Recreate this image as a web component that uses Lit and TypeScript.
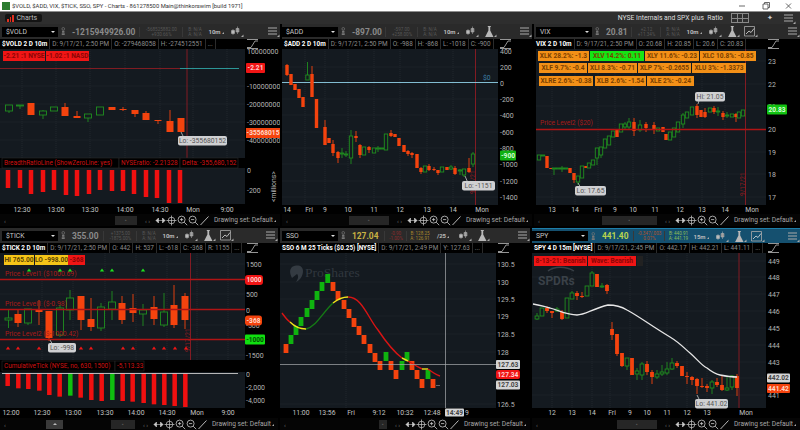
import { LitElement, html, css, svg } from 'lit'
import { customElement } from 'lit/decorators.js'

// [x, top, bottom, up, wickTop, wickBottom]
type Candle = [number, number, number, number?, number?, number?]

const UP = '#1f8f1f'
const DOWN = '#f4430e'
const LINE_RED = '#b01414'

const candles = (list: Candle[], w: number) => list.map(([x, t, b, up, wt, wb]) => {
  const color = up ? UP : DOWN
  return svg`
    <line x1=${x} x2=${x} y1=${wt ?? t} y2=${wb ?? b} stroke=${color} stroke-width="0.9"></line>
    <rect x=${x - w / 2} y=${t} width=${w} height=${Math.max(b - t, 1)}
      fill=${up ? '#141a20' : color} stroke=${up ? color : 'none'} stroke-width="0.9"></rect>`
})

const grid = (xs: number[], ys: number[], x0: number, x1: number, y0: number, y1: number) => svg`
  ${xs.map(x => svg`<line x1=${x} x2=${x} y1=${y0} y2=${y1} stroke="#2a3138" stroke-width="0.6" stroke-dasharray="1 1"></line>`)}
  ${ys.map(y => svg`<line x1=${x0} x2=${x1} y1=${y} y2=${y} stroke="#1f252c" stroke-width="0.6"></line>`)}`

const pill = (x: number, y: number, w: number, text: string, fill: string, color: string, r = 0, h = 10) => svg`
  <rect x=${x} y=${y} width=${w} height=${h} rx=${r} fill=${fill}></rect>
  <text x=${x + w / 2} y=${y + h / 2 + 2.4} text-anchor="middle" font-size="6.6" font-weight="700" fill=${color}>${text}</text>`

const axis = (x: number, items: [string, number][]) => items.map(([t, y]) =>
  svg`<text x=${x} y=${y + 2.5} font-size="7" fill="#b4b4b4">${t}</text>`)

const times = (y: number, items: [string, number][]) => items.map(([t, x]) =>
  svg`<text x=${x} y=${y} text-anchor="middle" font-size="6.8" fill="#c4c4c4">${t}</text>`)

const bubble = (x: number, y: number, w: number, text: string, tipX: number, tipY: number) => svg`
  <line x1=${tipX} y1=${tipY} x2=${tipX + 3} y2=${y + 2} stroke="#c8c8c8" stroke-width="0.8"></line>
  <rect x=${x} y=${y} width=${w} height="9.5" rx="2" fill="#cfd0d2"></rect>
  <text x=${x + w / 2} y=${y + 7} text-anchor="middle" font-size="6.8" fill="#555">${text}</text>`

const vline = (x: number, y0: number, y1: number) =>
  svg`<line x1=${x} x2=${x} y1=${y0} y2=${y1} stroke="#8f1c24" stroke-width="0.9"></line>`

const dateText = (x: number, y: number) =>
  svg`<text transform="translate(${x} ${y}) rotate(-90)" font-size="6.5" fill="#8c1c20">9/17/21</text>`

const bars = (xs: number[], top: number, bottoms: number[], w: number, green: number[] = []) =>
  xs.map((x, i) => svg`<rect x=${x - w / 2} y=${top} width=${w} height=${bottoms[i] - top}
    fill=${green.includes(i) ? '#0fc00f' : '#f01010'}></rect>`)

const studyHead = (y: number, cells: [string, number, number][], color: string) => cells.map(([t, x, w]) => svg`
  <rect x=${x} y=${y} width=${w} height="10" fill="#000" stroke="#2a2a2a" stroke-width="0.6"></rect>
  <text x=${x + 2} y=${y + 7} font-size="6.4" fill=${color}>${t}</text>`)

function chart1 () {
  const c: Candle[] = [
    [9, 105, 111, 1, 105, 113], [20, 105, 105.5, 1, 105, 109], [31, 103, 115], [43, 111, 115, 1, 110, 119],
    [54, 107, 111, 1], [65, 107, 116, 0, 103, 116], [77, 116, 118, 0, 111, 118], [88, 114, 118, 1, 114, 122],
    [100, 107, 115, 1], [112, 107, 110], [123, 109, 110, 0, 107, 111], [135, 110, 114, 0, 110, 117],
    [146, 113, 120, 0, 111, 120], [158, 120, 121, 0, 120, 124], [170, 121, 132, 0, 110, 132], [181, 118, 132]
  ]
  return svg`
    <rect x="0" y="49" width="245" height="109" fill="#141a20"></rect>
    <rect x="0" y="168" width="245" height="36" fill="#141a20"></rect>
    ${grid([22, 56, 90, 125, 160, 193, 227], [86, 104, 122, 140], 0, 245, 49, 158)}
    ${vline(187, 49, 158)}
    <line x1="0" x2="180" y1="68.5" y2="68.5" stroke="#8c1d22" stroke-width="0.9"></line>
    <line x1="180" x2="239" y1="68.5" y2="68.5" stroke="#2fa5a5" stroke-width="0.9"></line>
    ${pill(3, 51, 42, '-2.21 :1 NYSE', '#f01515', '#8a0505')}
    ${pill(46, 51, 43, '-1.02 :1 NASD', '#f01515', '#8a0505')}
    ${candles(c, 7)}
    ${bubble(178, 136, 49, 'Lo: -355680152', 181, 132)}
    ${studyHead(158, [['BreadthRatioLine (ShowZeroLine: yes)', 2, 117], ['NYSEratio: -2.21328', 119, 61], ['Delta: -355,680,152', 180, 58]], '#d01010')}
    ${bars([8, 20, 31, 43, 54, 66, 77, 89, 100, 112, 123, 134, 146, 157, 169, 180], 170,
      [188, 188, 194, 192, 190, 195, 196, 194, 190, 191, 191, 194, 197, 198, 203, 203], 4.5)}
    <rect x="245" y="49" width="35" height="156" fill="#000"></rect>
    ${axis(247, [['10000000', 51], ['-10000000', 86], ['-20000000', 104], ['-30000000', 122], ['-40000000', 140], ['0', 170], ['-200', 190]])}
    ${pill(246, 63, 19, '-2.21', '#f01515', '#ffd0d0', 1)}
    ${pill(246, 128, 34, '-35568015', '#f4430e', '#ffd8c8', 0)}
    <text transform="translate(276 202) rotate(-90)" font-size="6.8" fill="#b4b4b4">&lt;millions&gt;</text>
    ${times(212, [['12:30', 22], ['13:00', 56], ['13:30', 90], ['14:00', 125], ['14:30', 160], ['Mon', 193], ['9:00', 227]])}`
}

function chart2 () {
  const c: Candle[] = [
    [287, 65, 75, 0, 64, 76], [291, 74, 85], [295, 84, 90], [299, 89, 98], [303, 97, 107],
    [307.5, 75, 80, 1, 62, 80], [312, 74, 97, 0, 66, 97], [316.5, 99, 128], [325, 127, 145, 0, 120, 145], [329, 138, 143],
    [333, 144, 153, 0, 140, 156], [338, 152, 158, 0, 151, 163], [342, 153, 154, 1, 148, 158], [346, 154, 155, 1, 151, 157],
    [351, 136, 158, 1, 130, 164], [356, 136, 138, 0, 131, 142], [360, 145, 155, 0, 144, 158], [364, 147, 155, 1],
    [369, 147, 150, 0, 146, 153], [374, 148, 153, 1], [378, 148, 149, 1, 146, 152], [382, 148, 149, 1],
    [386, 134, 150, 1], [391, 133, 136, 0, 130, 137], [395, 134, 137], [399, 138, 146], [404, 145, 152],
    [408, 151, 154, 0, 150, 156], [412, 153, 155, 0, 152, 158], [417, 154, 168], [421, 168, 172, 0, 167, 174],
    [425, 166, 172, 1], [429, 166, 170, 0, 164, 171], [434, 169, 170, 0, 167, 171], [438, 170, 173, 0, 170, 175],
    [442, 167, 172, 1], [447, 167, 170], [451, 167, 169, 1, 165, 170], [455, 168, 174, 0, 166, 175],
    [460, 170, 171, 1, 169, 175], [464, 169, 175, 1, 169, 177], [469, 168, 172, 0, 158, 173], [473, 154, 164, 1, 152, 167]
  ]
  return svg`
    <rect x="282" y="49" width="216" height="156" fill="#141a20"></rect>
    ${grid([305, 325, 348, 374, 400, 427, 453], [67, 99, 115, 132, 148, 164, 181, 197], 282, 498, 49, 205)}
    ${vline(475.5, 49, 205)}
    ${dateText(475, 194)}
    <line x1="282" x2="498" y1="82.5" y2="82.5" stroke="#8fd0e6" stroke-width="0.9"></line>
    <text x="483" y="80" font-size="6.8" fill="#3d7fa6">$0</text>
    ${candles(c, 3.4)}
    ${bubble(462, 181, 33, 'Lo: -1151', 465, 176)}
    ${axis(500, [['400', 51], ['200', 67], ['0', 83], ['-200', 99], ['-400', 115], ['-600', 132], ['-800', 148], ['-1000', 164], ['-1200', 181], ['-1400', 197]])}
    ${pill(500, 150.5, 16, '-900', '#11b011', '#d8ffd8', 1)}
    ${times(212, [['14', 287], ['Fri', 309], ['9', 325], ['10', 348], ['11', 374], ['12', 400], ['13', 427], ['14', 453], ['Mon', 482]])}`
}

function chart3 () {
  const c: Candle[] = [
    [539, 155, 160, 1], [543, 155, 156, 1], [547, 156, 168], [551, 168, 169], [554, 168, 169, 1, 168, 175],
    [558, 168, 169, 1], [562, 168, 169, 1, 166, 172], [566, 168, 169, 1], [570, 168, 173], [574, 173, 180, 0, 173, 183],
    [578, 176, 182, 1, 176, 185], [582, 166, 178, 1], [586, 166, 168], [589, 163, 168, 1], [593, 160, 165, 1],
    [597, 148, 158, 1, 148, 165], [601, 147, 155, 1, 147, 158], [605, 139, 148, 1], [609, 136, 145, 1], [613, 131, 137, 1],
    [617, 130, 137], [621, 124, 132, 1], [625, 124, 127, 1, 122, 130], [629, 122, 127, 1, 118, 130], [634, 122, 131, 0, 118, 136],
    [640, 125, 130, 1, 120, 132], [646, 124, 128, 0, 122, 132], [654, 125, 130, 0, 122, 134], [658, 128, 131, 1], [663, 127, 132],
    [666, 134, 140], [670, 132, 140, 1], [674, 128, 137, 1], [678, 122, 132, 1], [683, 115, 124, 1, 113, 128],
    [687, 112, 118, 1], [692, 107, 115, 1], [697, 106, 115, 0, 104, 118], [701, 110, 117], [705, 112, 117, 0, 108, 118],
    [710, 108, 112, 1], [714, 108, 112, 0, 106, 114], [718, 111, 112, 1, 107, 116], [723, 113, 117, 0, 111, 120],
    [727, 115, 116, 1, 112, 118], [732, 114, 117, 1], [736, 114, 117, 0, 113, 122], [739, 112, 118, 1], [743, 110, 116, 1]
  ]
  const tag = (x: number, y: number, w: number, t: string, fill = '#f39017') => pill(x, y, w, t, fill, '#7a3f00', 0, 10)
  return svg`
    <rect x="536" y="49" width="230" height="156" fill="#141a20"></rect>
    ${grid([552, 575, 598, 615, 633, 655, 680, 702, 725], [61, 84, 106, 152, 174, 197], 536, 766, 49, 205)}
    ${vline(745.5, 49, 205)}
    ${dateText(745, 196)}
    ${candles(c, 3.4)}
    <line x1="536" x2="766" y1="129.5" y2="129.5" stroke=${LINE_RED} stroke-width="1.4"></line>
    <text x="540" y="125" font-size="6.6" fill="#a81a1a">Price Level2 ($20)</text>
    ${tag(538, 51, 51, 'XLK 28.2%: -1.3')}${tag(590, 51, 54, 'XLV 14.2%: 0.11', '#14e614')}
    ${tag(645, 51, 54, 'XLY 11.6%: -0.23')}${tag(700, 51, 56, 'XLC 10.8%: -0.85')}
    ${tag(539, 63, 48, 'XLF 9.7%: -0.4')}${tag(588, 63, 49, 'XLI 8.3%: -0.71')}
    ${tag(638, 63, 53, 'XLP 7%: -0.2655')}${tag(692, 63, 54, 'XLU 3%: -1.3373')}
    ${tag(539, 76, 54, 'XLRE 2.6%: -0.38')}${tag(595, 76, 51, 'XLB 2.6%: -1.54')}${tag(647, 76, 47, 'XLE 2%: -0.24')}
    ${bubble(695, 92, 30, 'Hi: 21.05', 698, 104)}
    ${bubble(575, 186, 31, 'Lo: 17.65', 578, 183)}
    ${axis(768, [['23', 61], ['22', 84], ['21', 106], ['20', 129], ['19', 152], ['18', 174], ['17', 197]])}
    ${pill(767, 104.5, 20, '20.83', '#12c212', '#d8ffd8', 1)}
    ${times(212, [['13', 552], ['14', 575], ['Fri', 598], ['9', 615], ['10', 633], ['11', 655], ['12', 680], ['13', 702], ['14', 725], ['Mon', 752]])}`
}

function chart4 () {
  const c: Candle[] = [
    [8.5, 318, 320, 1, 310, 328], [18, 314, 323, 0, 310, 327], [28, 309, 323, 1, 309, 325], [39, 309, 312, 0, 300, 325],
    [49, 311, 338, 0, 311, 341], [60, 308, 335, 1, 305, 337], [70, 298, 310, 1, 290, 320], [81, 296, 320, 0, 296, 330],
    [91, 319, 327, 0, 298, 331], [101, 307, 328, 1, 303, 331], [112, 302, 309, 1, 291, 320], [122, 303, 320, 0, 296, 324],
    [133, 308, 313, 0, 294, 322], [143, 310, 314, 1, 304, 326], [154, 307, 319, 0, 296, 325], [164, 312, 325, 1, 293, 327],
    [174, 305, 325, 0, 285, 328], [185, 296, 320, 0, 293, 329]
  ]
  const tri = (x: number, y: number, fill: string) =>
    svg`<polygon points="${x - 2.2},${y + 3} ${x + 2.2},${y + 3} ${x},${y}" fill=${fill}></polygon>`
  const xs = [23, 55, 85, 118, 148, 179, 211, 242, 274, 305, 337, 368, 398, 431, 462, 493, 524, 556].map(v => v / 3)
  const ends = [183, 190, 192, 197, 210, 215, 212, 218, 225, 228, 225, 228, 230, 234, 238, 240, 243, 246].map(v => 325 + v / 3)
  return svg`
    <rect x="0" y="253" width="245" height="107" fill="#141a20"></rect>
    <rect x="0" y="372" width="245" height="36" fill="#141a20"></rect>
    ${grid([42, 73, 105, 136, 167, 197, 228], [264, 294, 325, 355], 0, 245, 253, 360)}
    ${vline(190.5, 253, 360)}
    ${candles(c, 7)}
    ${dateText(190, 352)}
    ${[279.5, 309.5, 339.5].map(y => svg`<line x1="0" x2="245" y1=${y} y2=${y} stroke=${LINE_RED} stroke-width="1.5"></line>`)}
    <text x="5" y="276" font-size="6.8" fill="#a81a1a">Price Level1 ($1000.69)</text>
    <text x="5" y="306" font-size="6.8" fill="#a81a1a">Price Level1 ($-0.98)</text>
    <text x="5" y="336" font-size="6.8" fill="#a81a1a">Price Level2 ($-1000.42)</text>
    ${pill(4, 255, 30, 'HI 765.00', '#f5c518', '#5a4300')}
    ${pill(35, 255, 33, 'LO -998.00', '#f5c518', '#5a4300')}
    ${pill(68, 255, 17, '-368', '#f01515', '#8a0505')}
    ${[29, 60, 70, 102, 112, 143].map(x => tri(x, 268.5, '#1fe01f'))}
    ${[8, 18, 39, 81, 91, 123, 133, 154, 164, 175, 186].map(x => tri(x, 346.5, '#f01515'))}
    ${bubble(48, 343, 28, 'Lo: -998', 50, 340)}
    ${studyHead(361, [['CumulativeTick (NYSE, no, 630, 1500)', 2, 113], ['-5,113.33', 115, 29]], '#d01010')}
    ${bars(xs, 373, ends, 4.5, [6, 10])}
    <line x1="2" x2="238" y1="373.5" y2="373.5" stroke="#c8c8c8" stroke-width="0.9"></line>
    <rect x="245" y="253" width="33" height="155" fill="#000"></rect>
    ${axis(246, [['1500', 264], ['500', 294], ['0', 310], ['-500', 325], ['-1500', 355], ['0', 374], ['-2,000', 387], ['-4,000', 400]])}
    ${pill(245, 275, 18, '1000', '#f01515', '#ffd0d0', 3)}
    ${pill(245, 315.5, 17, '-368', '#f4430e', '#ffd8c8', 3)}
    ${pill(245, 334.5, 20, '-1000', '#10e010', '#064d06', 1)}
    ${times(415, [['12:00', 11], ['12:30', 42], ['13:00', 73], ['13:30', 105], ['14:00', 136], ['14:30', 167], ['Mon', 197], ['9:00', 228]])}`
}

function chart5 () {
  const bricks: [number, number, number][] = [
    [327.7, 274, 1], [322, 282, 1], [317, 291, 1], [312, 300, 1], [307, 308, 1], [301, 317, 1], [296, 326, 1], [291, 335, 1], [286, 344, 0],
    [333, 282, 0], [338, 291, 0], [344, 300, 0], [349, 309, 0], [354, 318, 0], [359, 326, 0], [364, 335, 0], [370, 344, 0], [375, 353, 0],
    [380, 361, 0], [386, 352, 1], [391, 361, 0], [396, 370, 0], [402, 361, 1], [407, 352, 1], [412, 361, 0], [417, 370, 0], [422, 379, 0],
    [428, 370, 1], [433, 379, 0]
  ]
  return svg`
    <rect x="280" y="253" width="216" height="155" fill="#141a20"></rect>
    ${grid([346], [264, 282, 299, 316, 334, 352, 404], 280, 496, 253, 408)}
    <path d="M292 267c6-3 11-1 11 4s-3 9-7 11c2-3 3-6 1-8l-5 4c-2-4-3-8 0-11z" fill="#343b42"></path>
    <text x="305" y="277" font-family="'Liberation Serif', serif" font-size="13.5" fill="#30373e">ProShares</text>
    ${bricks.map(([x, y, up]) => svg`<rect x=${x - 2.4} y=${y} width="4.8" height="9" fill=${up ? '#0fb30f' : '#f4430e'}></rect>`)}
    <path d="M282 313C285 317 287 320 290 322" fill="none" stroke="#d81414" stroke-width="1.4"></path>
    <path d="M290 322C294 326 300 329 306 329" fill="none" stroke="#f2e21a" stroke-width="1.4"></path>
    <path d="M306 329C316 327 323 312 333 303" fill="none" stroke="#157a15" stroke-width="1.4"></path>
    <path d="M333 303C338 299 343 297 348 297" fill="none" stroke="#f2e21a" stroke-width="1.4"></path>
    <path d="M348 297C362 297 368 318 378 330C386 342 394 352 402 358" fill="none" stroke="#d81414" stroke-width="1.4"></path>
    <path d="M402 358L408 361" fill="none" stroke="#f2e21a" stroke-width="1.4"></path>
    <path d="M408 361C416 366 420 368 422 369" fill="none" stroke="#d81414" stroke-width="1.4"></path>
    <path d="M422 369L428 369" fill="none" stroke="#f2e21a" stroke-width="1.4"></path>
    <path d="M428 369C432 372 436 375 440 376" fill="none" stroke="#d81414" stroke-width="1.4"></path>
    <line x1="436" x2="440" y1="385.5" y2="385.5" stroke="#888" stroke-width="0.7"></line>
    <line x1="280" x2="496" y1="364.5" y2="364.5" stroke="#a9adb0" stroke-width="0.7"></line>
    <line x1="445.5" x2="445.5" y1="253" y2="408" stroke="#a9adb0" stroke-width="0.7"></line>
    ${axis(497, [['130.5', 264], ['130', 282], ['129.5', 299], ['129', 316], ['128.5', 334], ['128', 352], ['126.5', 404]])}
    ${pill(496, 360, 24, '127.63', '#d4d5d6', '#444', 1, 9)}
    ${pill(496, 370, 24, '127.34', '#f01515', '#ffd0d0', 2, 9)}
    ${pill(496, 380.5, 24, '127.03', '#d4d5d6', '#444', 1, 9)}
    ${times(415, [['11:00', 301], ['13:56', 327], ['Fri', 351], ['9:12', 379], ['10:32', 405], ['12:48', 432], ['9', 467]])}
    ${pill(445, 408.5, 19, '14:49', '#d4d5d6', '#444', 1, 8)}`
}

function chart6 () {
  const c: Candle[] = [
    [537, 316, 319, 1, 313, 320], [542, 308, 316, 1], [547, 308, 311, 0, 306, 313], [552, 311, 313, 0, 311, 318], [557, 309, 311, 1, 307, 312],
    [562, 312, 319, 0, 310, 320], [567, 298, 318, 1], [572, 293, 299, 1, 291, 299], [577, 293, 296, 0, 291, 300], [582, 296, 297, 0, 292, 298],
    [587, 286, 296, 1], [592, 273, 286, 1, 271, 286], [597, 274, 287], [602, 286, 287, 1, 283, 288], [607, 285, 291, 0, 284, 294],
    [612, 329, 335, 0, 322, 340], [617, 334, 354, 0, 334, 356], [622, 353, 366, 0, 353, 367], [627, 358, 366, 1, 358, 370], [632, 358, 375],
    [637, 371, 374, 1, 368, 380], [642, 364, 375, 1, 362, 380], [647, 364, 372, 0, 361, 375], [652, 372, 377, 0, 370, 384], [657, 374, 377, 1, 370, 379],
    [662, 372, 374, 1, 365, 376], [667, 369, 373, 1, 362, 375], [672, 363, 369, 1, 358, 370], [677, 363, 366, 0, 361, 368], [682, 366, 376],
    [687, 376, 377, 0, 372, 384], [692, 377, 380, 0, 376, 385], [697, 379, 386, 0, 378, 394], [702, 386, 387, 0, 378, 388], [707, 386, 388, 0, 384, 392],
    [712, 382, 388, 1, 380, 394], [717, 382, 385, 0, 378, 387], [722, 385, 390, 0, 376, 391], [727, 388, 390, 1, 376, 391], [732, 376, 387, 1, 375, 390],
    [737, 376, 388, 0, 374, 396]
  ]
  return svg`
    <rect x="532" y="253" width="234" height="155" fill="#141a20"></rect>
    ${grid([552, 572, 592, 610, 630, 647, 667, 687, 707], [261, 277, 294, 311, 328, 345, 362, 378, 395], 532, 766, 253, 408)}
    ${vline(739, 253, 408)}
    <path d="M548 271C554 266 566 266 574 271" fill="none" stroke="#3a4148" stroke-width="1.4"></path>
    <text x="538" y="285" font-size="12" font-weight="700" fill="#3a4148">SPDRs</text>
    ${candles(c, 3.8)}
    <path d="M533 304C540 305 545 307 550 308C560 311 568 315 577 315C585 315 592 309 608 305C615 305 622 307 627 310C640 317 650 325 670 337C680 343 685 349 690 353C697 359 702 366 707 368C712 372 715 374 720 375C725 376 730 377 737 377" fill="none" stroke="#e6e6e6" stroke-width="1.3"></path>
    ${pill(534, 256, 53, '8-13-21: Bearish', '#f01515', '#8a0505')}
    ${pill(588, 256, 48, 'Wave: Bearish', '#f01515', '#8a0505')}
    <rect x="637" y="256" width="6" height="10" fill="#222"></rect>
    ${bubble(695, 399, 33, 'Lo: 441.02', 697, 395)}
    ${axis(768, [['449', 261], ['448', 277], ['447', 294], ['446', 311], ['445', 328], ['444', 345], ['443', 362], ['441', 395]])}
    ${pill(767, 373.5, 23, '442.02', '#d4d5d6', '#444', 1, 9)}
    ${pill(767, 384, 23, '441.42', '#f4430e', '#ffd8c8', 1, 9)}
    ${times(415, [['12', 552], ['13', 572], ['14', 592], ['Fri', 612], ['9', 630], ['10', 647], ['11', 667], ['12', 687], ['13', 707], ['Mon', 746]])}`
}

interface Panel {
  x0: number; w: number; y0: number; plotEnd: number; pad: number; active?: boolean
  sym: string; price: string; priceColor: string; pw: number
  change: string[]; changeColor: string; cw: number
  ba: string[]; baColor: string; bw: number
  period: string; tw: number; icons: string[]
  info: string[]; chart: () => unknown
  track: number; extra?: boolean
}

const panels: Panel[] = [
  { x0: 0, w: 280, y0: 49, plotEnd: 245, pad: 2, sym: '$VOLD', price: '-1215949926.00', priceColor: '#8a8a8a', pw: 69,
    change: ['-568525882.00', '+930.66%'], changeColor: '#565656', cw: 43, ba: ['B: N/A', 'A: N/A'], baColor: '#565656', bw: 24, period: '10m', tw: 20, icons: ['candle'],
    info: ['$VOLD 2 D 10m', 'D: 9/17/21, 2:50 PM', 'O: -279468058', 'H: -274512551', '...'], chart: chart1, track: 22 },
  { x0: 282, w: 250, y0: 49, plotEnd: 498, pad: 0, sym: '$ADD', price: '-897.00', priceColor: '#8a8a8a', pw: 35,
    change: ['-597.00', '+258.00%'], changeColor: '#565656', cw: 32, ba: ['B: N/A', 'A: N/A'], baColor: '#565656', bw: 24, period: '10m', tw: 20, icons: ['candle', 'flask'],
    info: ['$ADD 2 D 10m', 'D: 9/17/21, 2:50 PM', 'O: -988', 'H: -868', 'L: -1018', 'C: -900'], chart: chart2, track: 40 },
  { x0: 534, w: 266, y0: 49, plotEnd: 766, pad: 2, sym: 'VIX', price: '20.81', priceColor: '#8a8a8a', pw: 27,
    change: ['+2.12', '+11.34%'], changeColor: '#565656', cw: 29, ba: ['B: N/A', 'A: N/A'], baColor: '#565656', bw: 24, period: '10m', tw: 20, icons: ['candle', 'flask', 'draw'],
    info: ['VIX 2 D 10m', 'D: 9/17/21, 2:50 PM', 'O: 20.68', 'H: 20.85', 'L: 20.6', 'C: 20.83'], chart: chart3, track: 55 },
  { x0: 0, w: 278, y0: 253, plotEnd: 245, pad: 2, sym: '$TICK', price: '355.00', priceColor: '#8a8a8a', pw: 33,
    change: ['+1375.00', '-1875.00%'], changeColor: '#565656', cw: 33, ba: ['B: N/A', 'A: N/A'], baColor: '#565656', bw: 24, period: '10m', tw: 20, icons: ['candle', 'flask', 'draw'],
    info: ['$TICK 2 D 10m', 'D: 9/17/21, 2:50 PM', 'O: 442', 'H: 537', 'L: -618', 'C: -368', 'R: 1155', '...'], chart: chart4, track: 24, extra: true },
  { x0: 280, w: 250, y0: 253, plotEnd: 496, pad: 2, sym: 'SSO', price: '127.04', priceColor: '#c9b243', pw: 34,
    change: ['-0.90', '-1.00%'], changeColor: '#8c2a2a', cw: 22, ba: ['B: 128.25', 'A: 126.91'], baColor: '#a8872a', bw: 26, period: '/25', tw: 22, icons: ['candle', 'flask'],
    info: ['SSO 6 M 25 Ticks ($0.25) [NYSE]', 'D: 9/17/21, 2:49 PM', 'Y: 127.63', '...'], chart: chart5, track: 8 },
  { x0: 532, w: 268, y0: 253, plotEnd: 766, pad: 0, active: true, sym: 'SPY', price: '441.40', priceColor: '#b9d44e', pw: 33,
    change: ['-0.347/.003', '0.07%'], changeColor: '#b0502a', cw: 31, ba: ['B: 440.91', 'A: 441.19'], baColor: '#8fbf5a', bw: 27, period: '15m', tw: 20, icons: ['candle', 'flask', 'draw'],
    info: ['SPY 4 D 15m [NYSE]', 'D: 9/17/21, 2:45 PM', 'O: 442.17', 'H: 442.21', 'L: 441.11', '...'], chart: chart6, track: 40 }
]

const corner = svg`<polygon points="13,12 15.5,12 15.5,9.5" fill="#aaa"></polygon>`

const icons: Record<string, unknown> = {
  hand: svg`<circle cx="7" cy="3" r="1.8" fill="none" stroke="#777" stroke-width="0.9"></circle>
    <path d="M5.4 5.500h3.200v2.600h-3.200zM5 8.800h4v2.200h-4z" fill="#777"></path>`,
  candle: svg`<path d="M5 4v6M5 5.500h-1.500v3h3v-3z" fill="#bbb" stroke="#bbb" stroke-width="0.5"></path>
    <path d="M9.500 1.500v7.500M8 3.500h3v3.500h-3z" fill="#888" stroke="#bbb" stroke-width="0.5"></path>${corner}`,
  flask: svg`<path d="M6.800 1h3v1h-.6v3.500l3.300 6.500h-8.400l3.300-6.500v-3.500h-.6z" fill="#b8b8b8"></path>${corner}`,
  draw: svg`<path d="M2.500 1.500h10v9.500h-10z" fill="none" stroke="#aaa" stroke-width="0.8"></path>
    <path d="M4 9l3-3 2 1.500 3-4" fill="none" stroke="#ddd" stroke-width="0.8"></path>${corner}`,
  menu: svg`<path d="M4 3h9M4 6h9M4 9h9" stroke="#aaa" stroke-width="1"></path>${corner}`
}

const ico = (name: string) => html`<svg class="ico" viewBox="0 0 16 13">${icons[name]}</svg>`

@customElement('app-root')
export class AppRoot extends LitElement {
  static styles = css`
    :host {
      display: block;
      width: 800px;
      height: 430px;
      overflow: hidden;
      background: #000;
      font-family: Roboto, "Liberation Sans", sans-serif;
      color: #ccc;
    }
    .title {
      height: 11px;
      background: #fff;
      border-bottom: 1px solid #8e8e8e;
      display: flex;
      align-items: center;
      font-size: 5.85px;
      color: #333;
      padding-left: 2px;
    }
    .logo { width: 8px; height: 8px; background: #2e7d32; margin-right: 2px; flex: none; }
    .winctl { margin-left: auto; display: flex; }
    .winctl svg { width: 23px; height: 10px; }
    .tabbar {
      height: 12px;
      background: #2e2e2e;
      display: flex;
      align-items: center;
      padding: 0 4px 0 5px;
      font-size: 7px;
    }
    .tab {
      display: flex;
      align-items: center;
      gap: 3px;
      width: 35px;
      height: 8px;
      padding-left: 2px;
      background: #141414;
      border-radius: 2px;
      color: #bbb;
    }
    .tab-bars { display: flex; align-items: flex-end; gap: 1px; height: 7px; }
    .tab-bars i { display: block; width: 1.5px; background: #e03020; }
    .workspace { margin-left: auto; color: #ddd; font-size: 6.8px; margin-right: 8px; white-space: pre; }
    .layout { width: 16px; height: 8px; border: 1px solid #888; margin-right: 11px;
      background: linear-gradient(#888, #888) center / 100% 1px no-repeat, linear-gradient(#888, #888) 33% 0 / 1px 100% no-repeat, linear-gradient(#888, #888) 66% 0 / 1px 100% no-repeat; }
    .pin { width: 20px; text-align: center; font-size: 7px; }
    .row { display: flex; gap: 2px; height: 202px; }
    .row + .row { margin-top: 2px; }
    .panel { display: flex; flex-direction: column; height: 202px; overflow: hidden; flex: none; }
    .toolbar {
      height: 15px;
      flex: none;
      display: flex;
      align-items: center;
      background: #2a2a2a;
      overflow: hidden;
      white-space: nowrap;
    }
    .panel.active .toolbar { background: #15506f; border-top: 1px solid #1d7da8; box-sizing: border-box; }
    .sym {
      width: 56px;
      height: 10px;
      flex: none;
      background: #000;
      display: flex;
      align-items: center;
      justify-content: space-between;
      padding: 0 3px 0 4px;
      box-sizing: border-box;
      font-size: 6.8px;
      color: #c8c8c8;
    }
    .caret { width: 0; height: 0; border: 2.5px solid transparent; border-top-color: #ddd; border-bottom: 0; }
    .ico { width: 16px; height: 13px; flex: none; }
    .hand { width: 12px; }
    .price { font-size: 8.4px; font-weight: 700; flex: none; padding-left: 2px; box-sizing: border-box; }
    .mini { font-size: 4.6px; line-height: 5px; flex: none; text-align: center; box-sizing: border-box; border-left: 1px solid #383838; padding-left: 1px; }
    .period { font-size: 6px; font-weight: 700; color: #bbb; text-align: center; flex: none; }
    .period::after {
      content: '';
      display: inline-block;
      margin-left: 1px;
      border-right: 2px solid #aaa;
      border-top: 2px solid transparent;
    }
    .push { margin-left: auto; }
    .info { height: 10px; flex: none; display: flex; background: #000; }
    .cells { display: flex; overflow: hidden; white-space: nowrap; flex: none; }
    .cells span {
      font-size: 6.4px;
      line-height: 10px;
      padding: 0 2px;
      color: #8b8b8b;
      border-right: 1px solid #2b2b2b;
      flex: none;
    }
    .cells span:first-child { color: #fff; font-weight: 700; }
    .style { width: 11px; height: 10px; margin-left: 2px; flex: none; }
    .canvas { display: block; height: 165px; flex: none; font-family: Roboto, "Liberation Sans", sans-serif; }
    .bottom {
      height: 12px;
      flex: none;
      background: #050505;
      display: flex;
      align-items: center;
      justify-content: flex-end;
      padding-right: 4px;
      font-size: 6.6px;
      color: #a8a8a8;
      white-space: nowrap;
    }
    .left-arrow { margin-right: auto; padding-left: 4px; color: #777; font-size: 6px; }
    .extra { width: 17px; height: 9px; background: #3a3a3a; margin-right: 48px; display: flex; align-items: center; justify-content: center; }
    .extra i { width: 0; height: 0; border: 2.5px solid transparent; border-bottom-color: #bbb; border-top: 0; }
    .track { height: 9px; background: #262626; display: flex; align-items: center; justify-content: center; flex: none; margin-right: 3px; color: #555; font-size: 5px; }
    .dots { color: #777; width: 15px; text-align: center; font-size: 6px; flex: none; }
    .tool { width: 11px; height: 11px; flex: none; }
    .set { margin-left: 4px; width: 62px; flex: none; }
    .set::after {
      content: '';
      display: inline-block;
      margin-left: 1px;
      border-right: 2px solid #aaa;
      border-top: 2px solid transparent;
    }
  `

  renderPanel (p: Panel) {
    return html`
      <div class="panel ${p.active ? 'active' : ''}" style="width:${p.w}px">
        <div class="toolbar" style="padding-left:${p.pad}px">
          <div class="sym">${p.sym}<span class="caret"></span></div>
          <svg class="ico hand" viewBox="0 0 16 13">${icons.hand}</svg>
          <div class="price" style="width:${p.pw}px;color:${p.priceColor}">${p.price}</div>
          <div class="mini" style="width:${p.cw}px;color:${p.changeColor}">${p.change[0]}<br>${p.change[1]}</div>
          <div class="mini" style="width:${p.bw}px;color:${p.baColor}">${p.ba[0]}<br>${p.ba[1]}</div>
          <div class="period" style="width:${p.tw}px">${p.period}</div>
          ${p.icons.map(i => html`<span style="margin-left:2px;display:flex">${ico(i)}</span>`)}
          <span class="push" style="display:flex">${ico('menu')}</span>
        </div>
        <div class="info">
          <div class="cells" style="width:${p.plotEnd - p.x0}px">
            ${p.info.map(t => html`<span>${t}</span>`)}
          </div>
          <svg class="style" viewBox="0 0 11 10">
            <path d="M0 8.500h4L8 2h3M0 9.500h11M0 .5h11" fill="none" stroke="#bbb" stroke-width="0.8"></path>
          </svg>
        </div>
        <svg class="canvas" width=${p.w} height="165" viewBox="${p.x0} ${p.y0} ${p.w} 165">${p.chart()}</svg>
        <div class="bottom">
          <span class="left-arrow">‹</span>
          ${p.extra ? html`<span class="extra"><i></i></span>` : ''}
          <span class="track" style="width:${p.track}px">▪</span>
          <span class="dots">‹ ›</span>
          <svg class="tool" viewBox="0 0 11 11"><path d="M1 5.500h9M1 5.500l2.500-2.500v5zM10 5.500l-2.500-2.500v5z" fill="#ccc" stroke="#ccc" stroke-width="0.6"></path></svg>
          <svg class="tool" viewBox="0 0 11 11"><circle cx="5.500" cy="5.500" r="3.300" fill="none" stroke="#ccc" stroke-width="0.7"></circle><path d="M5.500 .5v10M.5 5.500h10" stroke="#ccc" stroke-width="0.7"></path></svg>
          <svg class="tool" viewBox="0 0 11 11"><circle cx="4.600" cy="4.600" r="3.500" fill="none" stroke="#ccc" stroke-width="0.8"></circle><path d="M7.200 7.200l3 3M3 4.600h3.200M4.600 3v3.200" stroke="#ccc" stroke-width="0.8"></path></svg>
          <svg class="tool" viewBox="0 0 11 11"><circle cx="4.600" cy="4.600" r="3.500" fill="none" stroke="#ccc" stroke-width="0.8"></circle><path d="M7.200 7.200l3 3M3 4.600h3.200" stroke="#ccc" stroke-width="0.8"></path></svg>
          <svg class="tool" viewBox="0 0 11 11"><path d="M1.500 10L9.500 1.500" stroke="#ccc" stroke-width="0.9"></path></svg>
          <span class="set">Drawing set: Default</span>
        </div>
      </div>`
  }

  render () {
    return html`
      <div class="title">
        <span class="logo"></span>
        $VOLD, $ADD, VIX, $TICK, SSO, SPY - Charts - 861278500 Main@thinkorswim [build 1971]
        <div class="winctl">
          <svg viewBox="0 0 23 10"><path d="M8 5h6" stroke="#444" stroke-width="0.8"></path></svg>
          <svg viewBox="0 0 23 10"><path d="M9 3h5v5h-5zM10.500 3v-1.500h5v5h-1.500" fill="none" stroke="#444" stroke-width="0.8"></path></svg>
          <svg viewBox="0 0 23 10"><path d="M9 2.500l5 5M14 2.500l-5 5" stroke="#444" stroke-width="0.8"></path></svg>
        </div>
      </div>
      <div class="tabbar">
        <div class="tab">
          <span class="tab-bars"><i style="height:3px"></i><i style="height:5px"></i><i style="height:7px"></i></span>
          Charts
        </div>
        <span class="workspace">NYSE Internals and SPX plus  Ratio</span>
        <span class="layout"></span>
        <span class="pin">✦</span>
        <span style="display:flex">${ico('menu')}</span>
      </div>
      <div class="row">${panels.slice(0, 3).map(p => this.renderPanel(p))}</div>
      <div class="row">${panels.slice(3).map(p => this.renderPanel(p))}</div>
    `
  }
}
